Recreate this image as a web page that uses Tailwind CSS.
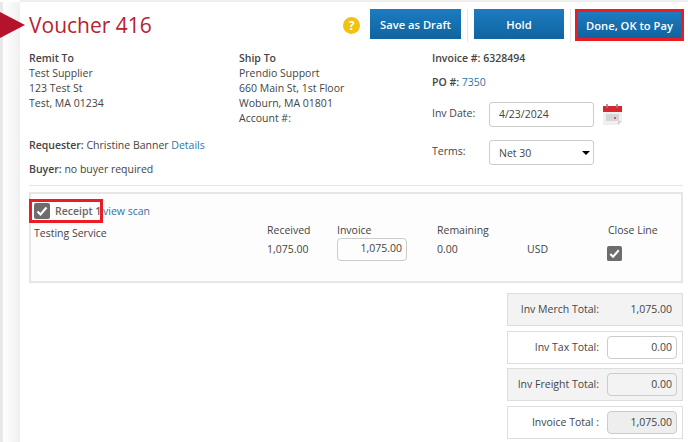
<!DOCTYPE html>
<html lang="en">
<head>
    <meta charset="UTF-8">
    <title>Voucher 416</title>
    <script src="https://cdn.jsdelivr.net/npm/@tailwindcss/browser@4"></script>
</head>
<body class="bg-white font-['Open_Sans',sans-serif] text-[10.5px] leading-[15px] text-[#444] w-[688px] h-[442px] overflow-hidden">
    <div class="relative h-[442px] flex flex-col">
        <!-- arrow marker -->
        <div class="absolute left-0 top-[12px] w-0 h-0 border-y-[13px] border-y-transparent border-l-[25px] border-l-[#b5132b] z-10"></div>

        <div class="h-[2px] bg-[#eee] shrink-0 ml-[20px]"></div>

        <div class="flex flex-1">
            <div class="w-[3px] bg-[#e8e8e8]"></div>
            <div class="w-[17px] bg-gradient-to-r from-white to-[#f0f0f0]"></div>

            <main class="flex-1 pl-[9px] pr-[4px]">
                <!-- header -->
                <div class="flex items-start justify-between h-[41px] pt-[7px]">
                    <h1 class="text-[21px] leading-[32px] text-[#b8222f] font-normal">Voucher 416</h1>
                    <div class="flex items-start">
                        <div class="w-[17px] h-[17px] mt-[8px] mr-[10px] rounded-full bg-[#f4c20d] text-white text-[12px] leading-[17px] font-bold text-center">?</div>
                        <button class="w-[91px] h-[30px] text-[11.2px] font-semibold text-white bg-gradient-to-b from-[#1c7cc0] to-[#10649f]">Save as Draft</button>
                        <div class="w-px h-[33px] bg-[#e6e6e6] mx-[6px]"></div>
                        <button class="w-[90px] h-[30px] text-[11.2px] font-semibold text-white bg-gradient-to-b from-[#1c7cc0] to-[#10649f]">Hold</button>
                        <div class="w-px h-[33px] bg-[#e6e6e6] ml-[6px] mr-[4px]"></div>
                        <button class="w-[109px] h-[32px] text-[11.2px] font-semibold text-white border-[3px] border-[#ed1c24] bg-gradient-to-b from-[#1c7cc0] to-[#10649f]">Done, OK to Pay</button>
                    </div>
                </div>

                <!-- addresses -->
                <div class="grid grid-cols-[210px_193px_1fr] h-[143px] pt-[8px] border-b border-[#e6e6e6] mr-[1px]">
                    <div>
                        <div class="font-semibold">Remit To</div>
                        <div>Test Supplier</div>
                        <div>123 Test St</div>
                        <div>Test, MA 01234</div>
                        <div class="mt-[27px]"><span class="font-semibold">Requester:</span> Christine Banner <a class="text-[#2b75ad]">Details</a></div>
                        <div class="mt-[9px]"><span class="font-semibold">Buyer:</span> no buyer required</div>
                    </div>
                    <div>
                        <div class="font-semibold">Ship To</div>
                        <div>Prendio Support</div>
                        <div>660 Main St, 1st Floor</div>
                        <div>Woburn, MA 01801</div>
                        <div>Account #:</div>
                    </div>
                    <div>
                        <div class="font-semibold">Invoice #: 6328494</div>
                        <div class="mt-[9px]"><span class="font-semibold">PO #:</span> <a class="text-[#2b75ad]">7350</a></div>
                        <div class="flex items-center mt-[12px]">
                            <span class="w-[57px] -mt-[2px]">Inv Date:</span>
                            <div class="w-[105px] h-[25px] border border-[#ccc] rounded-[3px] pl-[9px] leading-[23px]">4/23/2024</div>
                            <svg class="ml-[8px]" width="21" height="23" viewBox="0 0 21 23">
                                <path d="M1 8h19v10l-4 4H1z" fill="#f0f0f0"/>
                                <path d="M16 22l4-4h-4z" fill="#d0d0d0"/>
                                <path d="M1 3h19v6H1z" fill="#d8262c"/>
                                <path d="M5 1v4M15 1v4" stroke="#7a8a9a" stroke-width="1.5"/>
                                <path d="M4 11h13v7H4z" fill="#d6d6d6"/>
                                <path d="M12 14h2v2h-2z" fill="#e0555a"/>
                            </svg>
                        </div>
                        <div class="flex items-center mt-[13px]">
                            <span class="w-[57px] -mt-[2px]">Terms:</span>
                            <div class="w-[105px] h-[25px] border border-[#ccc] rounded-[3px] pl-[9px] pr-[3px] leading-[23px] flex items-center justify-between">
                                <span class="mt-[2px]">Net 30</span>
                                <span class="w-0 h-0 border-x-[4px] border-x-transparent border-t-[4px] border-t-black"></span>
                            </div>
                        </div>
                    </div>
                </div>

                <!-- receipt -->
                <div class="mt-[6px] h-[91px] border-2 border-[#e6e6e6] bg-[#fdfdfd] mr-[1px] pl-[3px] pt-[5px]">
                    <div class="flex items-center h-[24px]">
                        <div class="flex items-center h-[24px] w-[74px] -ml-[5px] pl-[2px] border-[3px] border-[#ed1c24] shrink-0">
                            <svg class="shrink-0" width="16" height="16" viewBox="0 0 16 16"><rect width="16" height="16" rx="2" fill="#6d6d6d"/><path d="M3.5 8.5l3 3 6-7" fill="none" stroke="#fff" stroke-width="2.2"/></svg>
                            <span class="ml-[5px] font-semibold text-[#666] whitespace-nowrap">Receipt 1</span>
                        </div>
                        <a class="text-[#2b75ad]">view scan</a>
                    </div>
                    <div class="grid grid-cols-[233px_70px_100px_90px_81px_1fr]">
                        <div class="mt-[3px]">Testing Service</div>
                        <div>Received<div class="mt-[2px] leading-[19px]">1,075.00</div></div>
                        <div>Invoice<div class="w-[70px] h-[23px] border border-[#ccc] rounded-[4px] text-right pr-[4px] leading-[19px]">1,075.00</div></div>
                        <div>Remaining<div class="mt-[2px] leading-[19px]">0.00</div></div>
                        <div class="pt-[17px] leading-[19px]">USD</div>
                        <div>Close Line
                            <svg class="mt-[8px] -ml-px" width="15" height="15" viewBox="0 0 16 16"><rect width="16" height="16" rx="2" fill="#6d6d6d"/><path d="M3.5 8.5l3 3 6-7" fill="none" stroke="#fff" stroke-width="2.2"/></svg>
                        </div>
                    </div>
                </div>

                <!-- totals -->
                <div class="flex flex-col items-end gap-[4.5px] mt-[10px] mr-[1px]">
                    <div class="w-[176px] h-[33px] border border-[#ddd] bg-[#f3f3f3] flex items-center pr-[10px]">
                        <span class="w-[91px] text-right">Inv Merch Total:</span>
                        <span class="flex-1 text-right">1,075.00</span>
                    </div>
                    <div class="w-[176px] h-[33px] border border-[#ddd] flex items-center pr-[5px]">
                        <span class="w-[91px] text-right">Inv Tax Total:</span>
                        <span class="ml-[8px] flex-1 h-[23px] border border-[#ccc] rounded-[4px] bg-white text-right pr-[4px] leading-[21px]">0.00</span>
                    </div>
                    <div class="w-[176px] h-[33px] border border-[#ddd] bg-[#f3f3f3] flex items-center pr-[5px]">
                        <span class="w-[91px] text-right whitespace-nowrap">Inv Freight Total:</span>
                        <span class="ml-[8px] flex-1 h-[23px] border border-[#ccc] rounded-[4px] text-right pr-[4px] leading-[21px]">0.00</span>
                    </div>
                    <div class="w-[176px] h-[33px] border border-[#ddd] flex items-center pr-[5px]">
                        <span class="w-[91px] text-right">Invoice Total :</span>
                        <span class="ml-[8px] flex-1 h-[23px] border border-[#ccc] rounded-[4px] bg-[#eee] text-right pr-[4px] leading-[21px]">1,075.00</span>
                    </div>
                </div>
            </main>
        </div>
    </div>
</body>
</html>
